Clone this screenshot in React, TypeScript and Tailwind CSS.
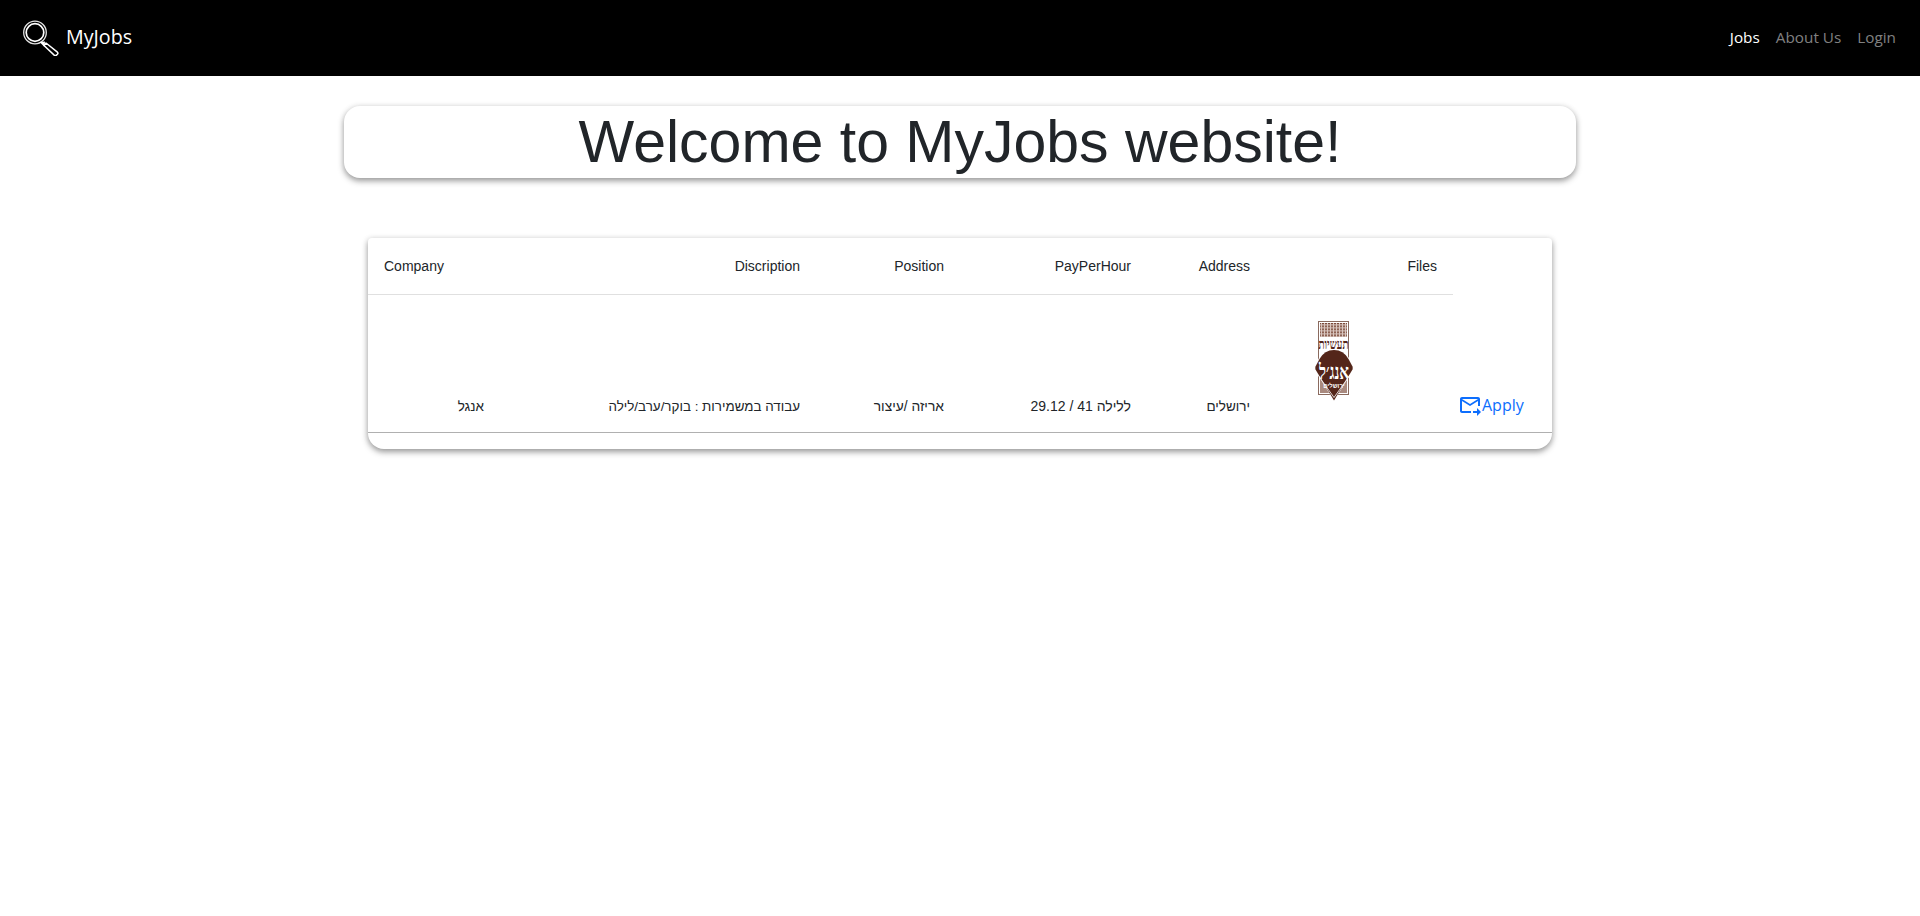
import { Fragment } from "react";

const uiFont = "font-['Open_Sans',sans-serif]";

function SearchLogo() {
  return (
    <svg width="38" height="38" viewBox="0 0 38 38" fill="none" className="shrink-0">
      <circle cx="14" cy="14.5" r="11.3" stroke="#e4e4e4" strokeWidth="1.3" />
      <circle cx="14" cy="14.5" r="8.8" stroke="#ffffff" strokeWidth="1.7" />
      <path d="M18.5 24 L23.5 29 L24 23.5 Z" fill="#ffffff" />
      <path
        d="M25 25 L36.4 34.2 Q37.4 35.2 36.4 36.3 L35.2 37.4 Q34.2 38 33.2 37.1 L23 27.5 Z"
        fill="#000000"
        stroke="#ffffff"
        strokeWidth="1.5"
        strokeLinejoin="round"
      />
    </svg>
  );
}

function CompanyLogo() {
  const lines = [0, 3, 6, 9, 12, 15, 18, 21, 24];
  return (
    <svg width="38" height="80" viewBox="0 0 38 80" className="block">
      <rect x="3.5" y="0.5" width="30" height="73" fill="#ffffff" stroke="#8a6a5e" />
      <rect x="5" y="2" width="27" height="14" fill="#7b4a3a" />
      {lines.map((x) => (
        <Fragment key={x}>
          <rect x={6 + x} y="2" width="1" height="14" fill="#d9c6bf" />
          <rect x="5" y={3 + x / 2} width="27" height="0.7" fill="#d9c6bf" />
        </Fragment>
      ))}
      <text
        transform="translate(18.5 28) scale(1 1.4)"
        textAnchor="middle"
        fontSize="10"
        fontWeight="700"
        fill="#54261a"
        direction="rtl"
        fontFamily="'Liberation Serif', serif"
      >
        תעשיות
      </text>
      <rect x="5" y="56" width="27" height="16" fill="#a98a7f" />
      <path d="M19 28 Q29 28 34 37 L38 45 Q38.5 47 38 49 L19 80 L0 49 Q-0.5 47 0 45 L4 37 Q9 28 19 28 Z" fill="#ffffff" />
      <path d="M19 29 Q28.5 29 33.5 38 L37.5 45.5 Q38 47 37.5 48.5 L19 79.5 L0.5 48.5 Q0 47 0.5 45.5 L4.5 38 Q9.5 29 19 29 Z" fill="#54261a" />
      <path d="M3 54 L19 76.5 L35 54" fill="none" stroke="#ffffff" strokeWidth="0.8" />
      <text
        transform="translate(19 58) scale(1 1.4)"
        textAnchor="middle"
        fontSize="15"
        fontWeight="700"
        fill="#ffffff"
        direction="rtl"
        fontFamily="'Liberation Serif', serif"
      >
        אנג׳ל
      </text>
      <text x="19" y="67" textAnchor="middle" fontSize="6" fontWeight="700" fill="#ffffff" direction="rtl" fontFamily="'Liberation Sans', sans-serif">
        ירושלים
      </text>
    </svg>
  );
}

function ForwardMailIcon() {
  return (
    <svg width="24" height="24" viewBox="0 0 24 24" fill="currentColor" className="shrink-0">
      <path d="M20 4H4c-1.1 0-2 .9-2 2v12c0 1.1.9 2 2 2h9v-2H4V8l8 5 8-5v5h2V6c0-1.1-.9-2-2-2zm-8 7L4 6h16l-8 5zm7 4 4 4-4 4v-3h-4v-2h4v-3z" />
    </svg>
  );
}

const headers = [
  { label: "Company", align: "text-left" },
  { label: "Discription", align: "text-right" },
  { label: "Position", align: "text-right" },
  { label: "PayPerHour", align: "text-right" },
  { label: "Address", align: "text-right" },
  { label: "Files", align: "text-right" },
];

const job = {
  company: "אנגל",
  description: "עבודה במשמירות : בוקר/ערב/לילה",
  position: "אריזה /עיצור",
  pay: "ללילה 41 / 29.12",
  address: "ירושלים",
};

const cell = "px-4 pb-[15px] align-bottom text-right";

export default function App() {
  return (
    <div className="min-h-[916px] bg-white font-['Liberation_Sans',Arial,sans-serif] text-[#212529]">
      <nav className={`flex h-[76px] items-center justify-between bg-black pb-[2px] pl-[21px] pr-4 ${uiFont}`}>
        <a className="flex items-center gap-[7px] text-[19.7px] text-white">
          <SearchLogo />
          <span>MyJobs</span>
        </a>
        <div className="flex text-[15.3px] text-[#808080]">
          <a className="px-2 text-white">Jobs</a>
          <a className="px-2">About Us</a>
          <a className="px-2">Login</a>
        </div>
      </nav>

      <main className="mx-auto flex w-[1232px] flex-col items-center pt-[30px]">
        <h1 className="h-[72px] w-full rounded-2xl bg-white text-center text-[59px] leading-[72px] shadow-[0_3px_6px_rgba(0,0,0,0.38),0_0_6px_rgba(0,0,0,0.08)]">
          Welcome to MyJobs website!
        </h1>

        <div className="mt-[60px] w-[1184px] rounded-b-2xl rounded-t-[4px] bg-white pb-4 shadow-[0_3px_6px_rgba(0,0,0,0.38),0_0_6px_rgba(0,0,0,0.08)]">
          <table className="w-full table-fixed border-collapse text-sm">
            <colgroup>
              <col className="w-[132px]" />
              <col className="w-[316px]" />
              <col className="w-[144px]" />
              <col className="w-[187px]" />
              <col className="w-[119px]" />
              <col className="w-[187px]" />
              <col className="w-[99px]" />
            </colgroup>
            <thead>
              <tr className="h-[56px]">
                {headers.map((h) => (
                  <th key={h.label} className={`border-b border-[#e0e0e0] px-4 font-normal ${h.align}`}>
                    {h.label}
                  </th>
                ))}
                <th />
              </tr>
            </thead>
            <tbody>
              <tr className="h-[138px] border-b border-[#b0b0b0]">
                <td dir="rtl" className={`${cell} text-[13.5px]`}>{job.company}</td>
                <td dir="rtl" className={`${cell} text-[13.4px]`}>{job.description}</td>
                <td dir="rtl" className={`${cell} text-[13.8px]`}>{job.position}</td>
                <td dir="rtl" className={`${cell} pb-[16px]`}>{job.pay}</td>
                <td dir="rtl" className={`${cell} text-[13.5px]`}>{job.address}</td>
                <td className="pb-[31px] pl-[49px] align-bottom">
                  <CompanyLogo />
                </td>
                <td className="pb-[15px] pl-[5px] align-bottom">
                  <a className={`flex items-center text-base text-[#0d6efd] ${uiFont}`}>
                    <ForwardMailIcon />
                    <span>Apply</span>
                  </a>
                </td>
              </tr>
            </tbody>
          </table>
        </div>
      </main>
    </div>
  );
}
